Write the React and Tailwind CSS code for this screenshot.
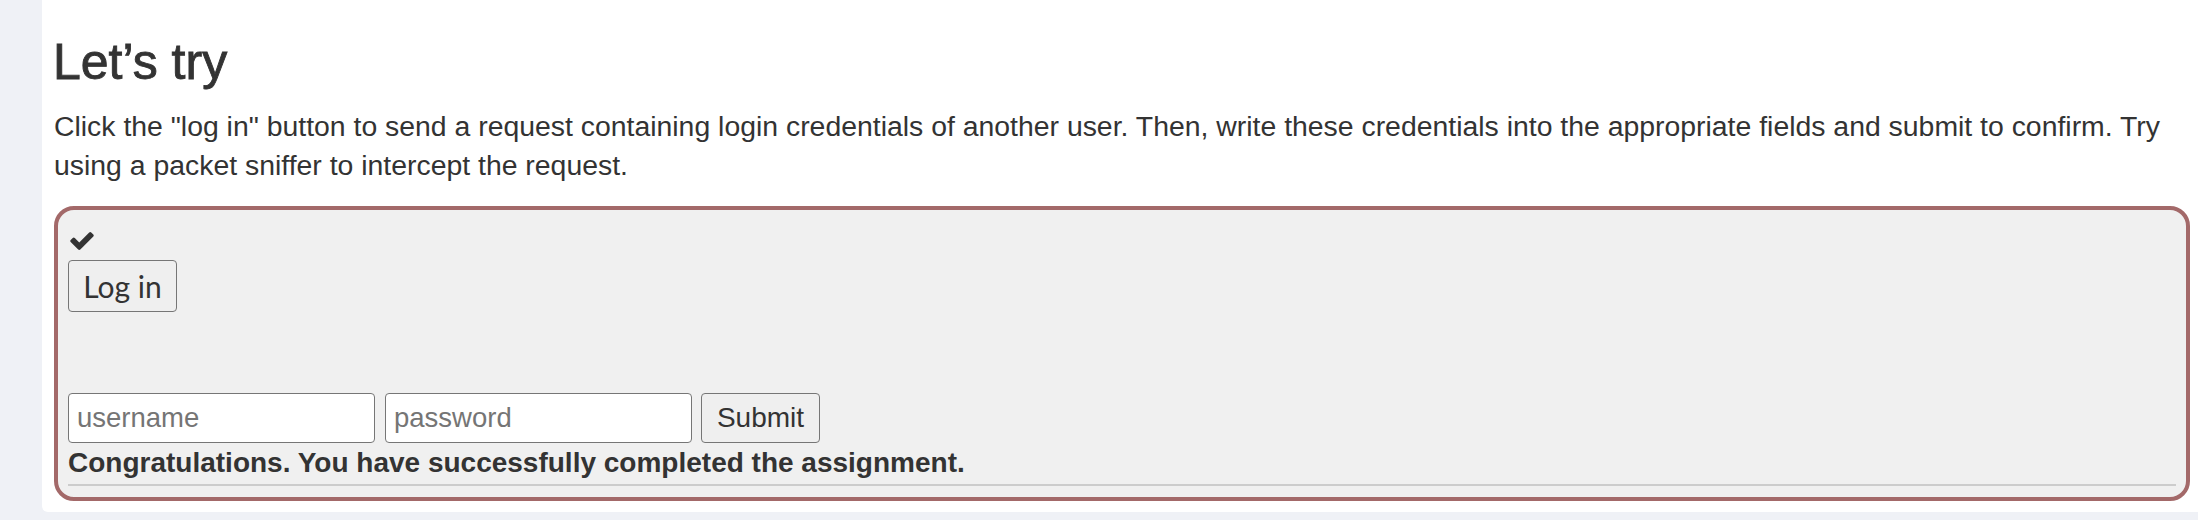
import React from "react";

function CheckIcon() {
  return (
    <svg
      className="ml-[2px] block h-[18px] w-[24px]"
      viewBox="121 334 1550 1188"
      fill="#333333"
    >
      <path d="M1671 566q0 40-28 68l-724 724-136 136q-28 28-68 28t-68-28l-136-136-362-362q-28-28-28-68t28-68l136-136q28-28 68-28t68 28l294 295 656-657q28-28 68-28t68 28l136 136q28 28 28 68z" />
    </svg>
  );
}

export default function App() {
  return (
    <div className="flex h-[520px] w-full bg-[#eff1f6] pl-[42px] font-['Liberation_Sans',Arial,sans-serif] text-[#333333]">
      <div className="h-[512px] flex-1 rounded-bl-[6px] bg-white pl-[12px] pr-[8px] pt-[35px]">
        <h2 className="ml-[-1px] text-[50px] leading-[54px] text-[#333333] [-webkit-text-stroke:0.9px_#333333]">
          Let’s try
        </h2>
        <p className="mt-[18px] text-[28.4px] leading-[39px] text-[#333333]">
          Click the "log in" button to send a request containing login
          credentials of another user. Then, write these credentials into the
          appropriate fields and submit to confirm. Try using a packet sniffer
          to intercept the request.
        </p>
        <div className="mt-[21px] rounded-[20px] border-[4px] border-[#a36969] bg-[#f0f0f0] px-[10px] pb-[11px] pt-[22px]">
          <CheckIcon />
          <button className="mt-[10px] block h-[52px] w-[109px] rounded-[4px] border border-[#767676] bg-[#efefef] font-['Lato',sans-serif] text-[30px] text-[#333333]">
            Log in
          </button>
          <div className="mt-[81px] flex items-center">
            <input
              type="text"
              placeholder="username"
              className="h-[50px] w-[307px] rounded-[4px] border border-[#767676] bg-white px-[8px] text-[27.5px] text-[#333333] outline-none placeholder:text-[#757575]"
            />
            <input
              type="password"
              placeholder="password"
              className="ml-[10px] h-[50px] w-[307px] rounded-[4px] border border-[#767676] bg-white px-[8px] text-[27.5px] text-[#333333] outline-none placeholder:text-[#757575]"
            />
            <button className="ml-[9px] h-[50px] w-[119px] rounded-[4px] border border-[#767676] bg-[#efefef] text-[28px] text-[#333333]">
              Submit
            </button>
          </div>
          <div className="mt-[4px] text-[28px] font-bold leading-[32px] text-[#333333]">
            Congratulations. You have successfully completed the assignment.
          </div>
          <div className="mt-[5px] h-[2px] bg-[#cccccc]" />
        </div>
      </div>
    </div>
  );
}
